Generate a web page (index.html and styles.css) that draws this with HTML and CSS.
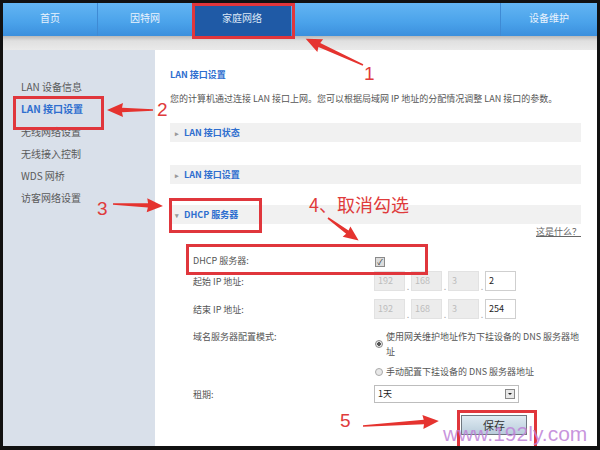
FILE: index.html
```html
<!DOCTYPE html>
<html lang="zh-CN">
<head>
    <meta charset="UTF-8">
    <title>家庭网络 - LAN 接口设置</title>
    <link rel="stylesheet" href="styles.css">
</head>
<body>

<div class="frame">

    <!-- Top Navigation -->
    <div class="nav">
        <div class="nav-item">首页</div>
        <div class="nav-item">因特网</div>
        <div class="nav-item active">家庭网络</div>
        <div class="nav-fill"></div>
        <div class="nav-item last">设备维护</div>
    </div>
    <div class="band"></div>

    <div class="main">
        <!-- Side Menu -->
        <ul class="side">
            <li>LAN 设备信息</li>
            <li class="current">LAN 接口设置</li>
            <li>无线网络设置</li>
            <li>无线接入控制</li>
            <li>WDS 网桥</li>
            <li>访客网络设置</li>
        </ul>

        <!-- Content -->
        <div class="content">
            <div class="title">LAN 接口设置</div>
            <p class="desc">您的计算机通过连接 LAN 接口上网。您可以根据局域网 IP 地址的分配情况调整 LAN 接口的参数。</p>

            <div class="bar first"><span class="tri">&#9656;</span>LAN 接口状态</div>
            <div class="bar"><span class="tri">&#9656;</span>LAN 接口设置</div>
            <div class="bar"><span class="tri">&#9662;</span>DHCP 服务器</div>

            <div class="whatis"><a href="#">这是什么？</a></div>

            <div class="form">
                <div class="row row-dhcp">
                    <div class="label">DHCP 服务器:</div>
                    <div class="value"><span class="check">&#10003;</span></div>
                </div>
                <div class="row row-start">
                    <div class="label">起始 IP 地址:</div>
                    <div class="value ip">
                        <span class="ip-box off">192</span><span class="dot">.</span>
                        <span class="ip-box off">168</span><span class="dot">.</span>
                        <span class="ip-box off">3</span><span class="dot">.</span>
                        <span class="ip-box">2</span>
                    </div>
                </div>
                <div class="row row-end">
                    <div class="label">结束 IP 地址:</div>
                    <div class="value ip">
                        <span class="ip-box off">192</span><span class="dot">.</span>
                        <span class="ip-box off">168</span><span class="dot">.</span>
                        <span class="ip-box off">3</span><span class="dot">.</span>
                        <span class="ip-box">254</span>
                    </div>
                </div>
                <div class="row row-dns">
                    <div class="label">域名服务器配置模式:</div>
                    <div class="value">
                        <div class="opt"><span class="radio on"></span><span class="opt-text">使用网关维护地址作为下挂设备的 DNS 服务器地址</span></div>
                        <div class="opt second"><span class="radio"></span><span class="opt-text">手动配置下挂设备的 DNS 服务器地址</span></div>
                    </div>
                </div>
                <div class="row row-lease">
                    <div class="label">租期:</div>
                    <div class="value">
                        <div class="select">1天<span class="select-btn"></span></div>
                    </div>
                </div>
                <div class="row row-save">
                    <div class="label"></div>
                    <div class="value"><button class="save" type="button">保存</button></div>
                </div>
            </div>
        </div>
    </div>

    <!-- Annotations (red boxes, arrows, numbers) -->
    <div class="mark mark-nav"></div>
    <div class="mark mark-side"></div>
    <div class="mark mark-bar"></div>
    <div class="mark mark-row"></div>
    <div class="mark mark-save"></div>

    <svg class="arrows" width="600" height="450" viewBox="0 0 600 450">
        <g fill="#e5332f">
            <polygon transform="translate(363 65) rotate(204.5)" points="0,-0.8 48,-2.2 47,-7 63,0 47,7 48,2.2 0,0.8"/>
            <polygon transform="translate(153 110) rotate(180)" points="0,-0.8 31,-2.2 30,-7 46,0 30,7 31,2.2 0,0.8"/>
            <polygon transform="translate(113 204) rotate(2.3)" points="0,-0.8 35,-2.2 34,-7 50,0 34,7 35,2.2 0,0.8"/>
            <polygon transform="translate(328 218) rotate(36.3)" points="0,-0.8 24,-2 23,-6.5 38,0 23,6.5 24,2 0,0.8"/>
            <polygon transform="translate(363 426) rotate(-3.8)" points="0,-0.8 61,-2.2 60,-7 76,0 60,7 61,2.2 0,0.8"/>
        </g>
    </svg>

    <span class="num num-1">1</span>
    <span class="num num-2">2</span>
    <span class="num num-3">3</span>
    <span class="num num-4">4、取消勾选</span>
    <span class="num num-5">5</span>

    <div class="watermark">www.192ly.com</div>
</div>

</body>
</html>
```

FILE: styles.css
```css
/* Page frame */
body {
    margin: 0;
    padding: 0;
    font-family: "Noto Sans CJK SC", "Liberation Sans", sans-serif;
    font-size: 9px;
    color: #555;
}

.frame {
    position: relative;
    width: 600px;
    height: 450px;
    box-sizing: border-box;
    border: 3px solid #111;
    border-bottom-width: 4px;
    display: flex;
    flex-direction: column;
    overflow: hidden;
    background: #fff;
}

/* Top Navigation */
.nav {
    display: flex;
    height: 33px;
    background: linear-gradient(#63b5f3, #4aa2ea 60%, #3b8fdd);
    flex-shrink: 0;
}

.nav-item {
    width: 94px;
    border-right: 1px solid #3f8ad4;
    color: #e9f3fd;
    font-size: 10px;
    line-height: 30px;
    text-align: center;
}

.nav-item.active {
    width: 98px;
    border-right: none;
    background: #1f5aa6;
    color: #dce8f6;
}

.nav-fill {
    flex: 1;
    border-right: 1px solid #3f8ad4;
}

.nav-item.last {
    width: 96px;
    border-right: none;
}

.band {
    height: 14px;
    background: linear-gradient(#b9b9b9, #e0e0e0 35%, #eaeaea);
    flex-shrink: 0;
}

.main {
    flex: 1;
    display: flex;
}

/* Side Menu */
.side {
    width: 154px;
    margin: 0;
    padding: 26px 0 0 18px;
    box-sizing: border-box;
    list-style: none;
    background: #d9e0ea;
}

.side li {
    font-size: 10px;
    line-height: 22.3px;
    color: #5a5a5a;
}

.side li.current {
    color: #2e6ecf;
    font-weight: bold;
}

/* Content */
.content {
    flex: 1;
    padding: 19px 16px 0 15px;
}

.title {
    font-size: 9px;
    line-height: 12px;
    color: #2e6ecf;
    font-weight: bold;
}

.desc {
    margin: 12px 0 0;
    font-size: 9px;
    line-height: 12px;
    color: #555;
    white-space: nowrap;
}

.bar {
    height: 19px;
    margin-top: 23px;
    padding-left: 5px;
    background: #f1f1f1;
    color: #2e6ecf;
    font-weight: bold;
    line-height: 19px;
}

.bar.first {
    margin-top: 18px;
}

.bar + .bar + .bar {
    margin-top: 21px;
}

.tri {
    display: inline-block;
    width: 9px;
    font-size: 7px;
    color: #999;
}

.whatis {
    margin-top: 2px;
    text-align: right;
    line-height: 12px;
}

.whatis a {
    color: #666;
    text-decoration: underline;
}

/* DHCP form */
.form {
    margin: 12px 0 0 23px;
}

.row {
    display: flex;
    align-items: center;
    height: 20px;
}

.label {
    width: 181px;
    flex-shrink: 0;
    color: #555;
}

.row-start { margin-top: 1px; }
.row-end { margin-top: 8px; }
.row-dns {
    margin-top: 10px;
    height: auto;
    align-items: flex-start;
}
.row-dns .label { line-height: 15px; }
.row-lease { margin-top: 6px; height: 18px; }
.row-save { margin-top: 12px; }

.check {
    display: inline-block;
    width: 8px;
    height: 8px;
    margin: 4px 0 0 1px;
    border: 1px solid #8a8a8a;
    background: #dcdcdc;
    color: #333;
    font-size: 8px;
    line-height: 8px;
    text-align: center;
}

.ip {
    display: flex;
    align-items: center;
}

.ip-box {
    width: 29px;
    height: 18px;
    padding-left: 3px;
    box-sizing: border-box;
    border: 1px solid #cfcfcf;
    background: #fff;
    color: #222;
    font-size: 9px;
    line-height: 16px;
}

.ip-box.off {
    background: #ececec;
    border-color: #e2e2e2;
    color: #bdbdbd;
}

.dot {
    width: 6px;
    align-self: flex-end;
    text-align: center;
    color: #aaa;
    line-height: 8px;
}

.ip-box { width: 31px; height: 20px; line-height: 18px; }

.opt {
    display: flex;
    align-items: center;
    line-height: 15px;
}

.opt.second {
    margin-top: 5px;
}

.opt-text {
    width: 195px;
    margin-left: 3px;
    color: #555;
}

.radio {
    width: 6px;
    height: 6px;
    margin-left: 1px;
    border: 1px solid #aaa;
    border-radius: 50%;
    background: #e8e8e8;
    flex-shrink: 0;
}

.radio.on {
    background: radial-gradient(circle, #555 0, #555 1.6px, #e4e4e4 2px);
    border-color: #8a8a8a;
}

.select {
    position: relative;
    width: 145px;
    height: 18px;
    box-sizing: border-box;
    border: 1px solid #bdbdbd;
    padding-left: 3px;
    color: #222;
    line-height: 16px;
}

.select-btn {
    position: absolute;
    right: 3px;
    top: 3px;
    width: 8px;
    height: 8px;
    border: 1px solid #888;
    background: #e8e8e8;
}

.select-btn::after {
    content: "";
    position: absolute;
    left: 2px;
    top: 3px;
    border-left: 2px solid transparent;
    border-right: 2px solid transparent;
    border-top: 2px solid #222;
}

.save {
    margin-left: 87px;
    width: 66px;
    height: 20px;
    border: 1px solid #6f7780;
    background: linear-gradient(#dfeaf2, #b9cddb);
    color: #333;
    font-family: "Noto Sans CJK SC", serif;
    font-size: 11px;
    padding: 0;
}

/* Annotations */
.mark {
    position: absolute;
    border: 3px solid #e0363c;
    box-sizing: border-box;
}

.mark-nav { left: 189px; top: 0; width: 103px; height: 36px; }
.mark-side { left: 10px; top: 93px; width: 91px; height: 34px; }
.mark-bar { left: 166px; top: 195px; width: 93px; height: 35px; }
.mark-row { left: 183px; top: 241px; width: 242px; height: 31px; }
.mark-save { left: 454px; top: 407px; width: 80px; height: 40px; }

.arrows {
    position: absolute;
    left: -3px;
    top: -3px;
}

.num {
    position: absolute;
    font-family: "Liberation Sans", "Noto Sans CJK SC", sans-serif;
    font-size: 19px;
    line-height: 20px;
    color: #df3b3b;
}

.num-1 { left: 361px; top: 61px; }
.num-2 { left: 154px; top: 97px; }
.num-3 { left: 94px; top: 196px; }
.num-4 {
    left: 306px;
    top: 191px;
    font-family: "Noto Sans CJK SC", sans-serif;
    font-size: 18px;
}
.num-5 { left: 337px; top: 408px; }

.watermark {
    position: absolute;
    left: 440px;
    top: 419px;
    font-family: "Liberation Sans", sans-serif;
    font-size: 21px;
    line-height: 24px;
    color: rgba(190, 130, 215, 0.85);
}
```
